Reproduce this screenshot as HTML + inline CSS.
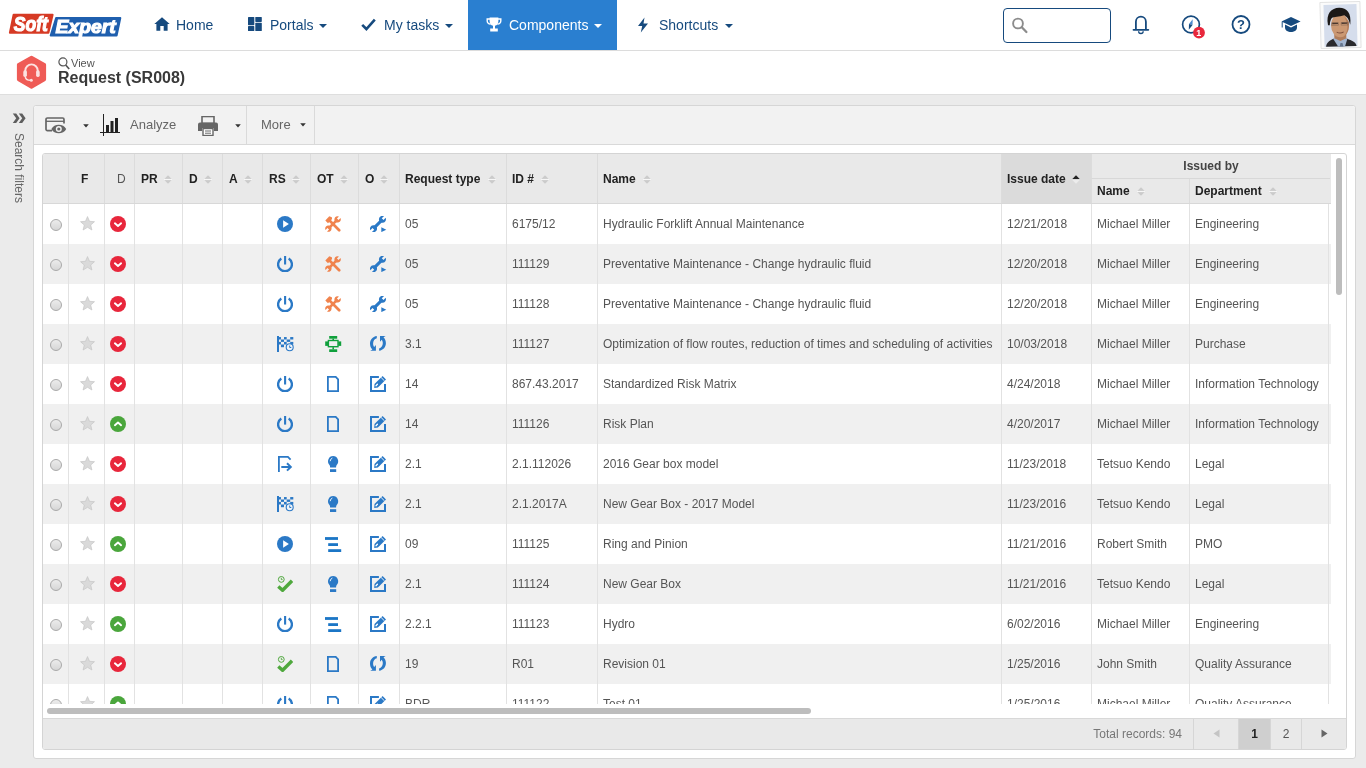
<!DOCTYPE html>
<html lang="en"><head><meta charset="utf-8"><title>Request (SR008)</title>
<style>
*{box-sizing:border-box;margin:0;padding:0}
html,body{width:1366px;height:768px;overflow:hidden;background:#ebebeb;font-family:"Liberation Sans",Arial,sans-serif;color:#555}
#nav{position:absolute;left:0;top:0;width:1366px;height:51px;background:#fff;border-bottom:1px solid #dcdcdc}
.ni{position:absolute;top:0;height:50px;line-height:50px;font-size:14px;color:#164a7e;white-space:nowrap}
.ni svg{position:absolute}
.caret{display:inline-block;width:0;height:0;border-left:4px solid transparent;border-right:4px solid transparent;border-top:4px solid currentColor;vertical-align:middle;margin-left:5px;position:relative;top:0px}
#comp{left:468px;width:149px;background:#2a7fd0;color:#fff}
#titlebar{position:absolute;left:0;top:51px;width:1366px;height:44px;background:#fff;border-bottom:1px solid #dedede}
#view{position:absolute;left:71px;top:6px;font-size:11px;color:#555;line-height:12px}
#title{position:absolute;left:58px;top:17px;font-size:16px;font-weight:bold;color:#3a3a3a;line-height:19px;letter-spacing:0}
#side{position:absolute;left:0;top:95px;width:34px;height:673px;background:#ebebeb}
#sidetxt{position:absolute;left:11px;top:133px;font-size:12px;color:#666;writing-mode:vertical-rl;line-height:16px;letter-spacing:0}
#panel{position:absolute;left:33px;top:105px;width:1323px;height:654px;background:#fff;border:1px solid #d6d6d6;border-radius:3px}
#tb{position:absolute;left:0;top:0;width:1321px;height:39px;background:#f2f2f2;border-bottom:1px solid #d9d9d9;border-radius:3px 3px 0 0}
.tbt{position:absolute;top:0;height:38px;line-height:38px;font-size:13px;color:#666}
.sep{position:absolute;top:0;width:1px;height:38px;background:#dadada}
#grid{position:absolute;left:8px;top:47px;width:1305px;height:597px;border:1px solid #d4d4d4;border-radius:3px;background:#fff;overflow:hidden}
#head{position:absolute;left:0;top:0;width:1288px;height:50px;background:#e9e9e9;border-bottom:1px solid #d8d8d8}
.h{position:absolute;font-size:12px;font-weight:bold;color:#222;padding-left:5px;padding-top:1px;border-left:1px solid #dcdcdc;white-space:nowrap;overflow:hidden}
.h:first-child{border-left:0}
.h.hf{padding-left:12px}
.h.hd{padding-left:12px}
.h.light{font-weight:normal;color:#555}
.h.sorted{background:#dbdbdb}
.h.sub{padding-top:0}
.h.grp{text-align:center;padding-left:0;padding-top:0;font-weight:bold;color:#444;border-bottom:1px solid #d8d8d8;height:25px !important}
.sort{margin-left:7px;vertical-align:middle;position:relative;top:0px}
.h.nar{padding-left:6px}
.h.nar .sort,.h.sorted .sort{margin-left:6px}
.h.rt .sort{margin-left:8px}
#body{position:absolute;left:0;top:50px;width:1288px;height:500px;overflow:hidden}
.row{position:absolute;left:0;width:1288px;height:40px;background:#fff}
.row.alt{background:#f0f0f0}
.c{position:absolute;top:0;height:40px;line-height:40px;font-size:12px;color:#555;border-left:1px solid #e2e2e2;white-space:nowrap;overflow:hidden}
.c:first-child{border-left:0}
.c.t{padding-left:5px}
.i{position:absolute;line-height:0;font-size:0}
.i svg{display:block}
.radio{display:block;width:12px;height:12px;border-radius:50%;border:1px solid #a9a9a9;background:linear-gradient(#ececec,#d6d6d6)}
#vsb{position:absolute;left:1293px;top:4px;width:6px;height:137px;border-radius:3px;background:#bdbdbd}
#hsb{position:absolute;left:4px;top:554px;width:764px;height:6px;border-radius:3px;background:#bdbdbd}
#foot{position:absolute;left:0;top:564px;width:1303px;height:31px;background:#e9e9e9;border-top:1px solid #d8d8d8}
.pg{position:absolute;top:0;height:30px;line-height:30px;text-align:center;font-size:12px;color:#555;border-left:1px solid #d6d6d6}
</style></head><body>
<div id="wrap" style="position:absolute;left:0;top:0;width:1366px;height:768px;will-change:transform">
<div id="nav">
  <svg id="logo" style="position:absolute;left:0;top:0" width="130" height="50" viewBox="0 0 130 50"><path d="M13.600 14.700 H52.600 L48.400 32.700 H9.900Z" fill="#d63a24" stroke="#d63a24" stroke-width="2" stroke-linejoin="round"/><path d="M56.100 18.100 H120.300 L116.600 35.600 H50.700Z" fill="#1f5fae" stroke="#1f5fae" stroke-width="2" stroke-linejoin="round"/>
    <text x="13.800" y="31.200" font-family="Liberation Sans,Arial,sans-serif" font-weight="bold" font-style="italic" font-size="20.800" fill="#fff" stroke="#fff" stroke-width="1.200" textLength="34" lengthAdjust="spacingAndGlyphs">Soft</text>
    <text x="55.600" y="32.800" font-family="Liberation Sans,Arial,sans-serif" font-weight="bold" font-style="italic" font-size="18.600" fill="#fff" stroke="#fff" stroke-width="1.100" textLength="60" lengthAdjust="spacingAndGlyphs">Expert</text></svg>
  <div class="ni" style="left:153px"><svg style="left:0.500px;top:16.500px" width="16" height="14" viewBox="0 0 16 14"><path d="M8 0.300 L0.300 7 H2.400 V13.700 H6.300 V9 H9.700 V13.700 H13.600 V7 H15.700Z" fill="#164a7e"/></svg><span style="margin-left:23px">Home</span></div>
  <div class="ni" style="left:248px"><svg style="left:0;top:17px" width="14" height="15" viewBox="0 0 14 15"><g fill="#164a7e"><rect x="0" y="0" width="6.300" height="8.200" rx="0.600"/><rect x="7.300" y="0" width="6.500" height="4.900" rx="0.600"/><rect x="0" y="9.100" width="6.300" height="5" rx="0.600"/><rect x="7.300" y="5.800" width="6.500" height="8.300" rx="0.600"/></g></svg><span style="margin-left:22px">Portals</span><span class="caret"></span></div>
  <div class="ni" style="left:361px"><svg style="left:0;top:18px" width="15" height="13" viewBox="0 0 15 13"><path d="M1.200 6.800 L5.400 11 L13.800 1.600" fill="none" stroke="#164a7e" stroke-width="2.600"/></svg><span style="margin-left:23px">My tasks</span><span class="caret" style="margin-left:6px"></span></div>
  <div class="ni" id="comp"><svg style="left:18px;top:17px" width="16" height="15" viewBox="0 0 16 15"><path d="M3.600 0.400 H12.400 V4 a4.400 5 0 0 1 -3.400 4.800 V11.600 H11.800 V14.600 H4.200 V11.600 H7 V8.800 A4.400 5 0 0 1 3.600 4Z" fill="#fff"/><path d="M4 2 H1.2 V4 a3 3 0 0 0 3.4 3 M12 2 H14.8 V4 a3 3 0 0 1 -3.4 3" fill="none" stroke="#fff" stroke-width="1.4"/></svg><span style="margin-left:41px">Components</span><span class="caret" style="margin-left:6px"></span></div>
  <div class="ni" style="left:637px"><svg style="left:0;top:17px" width="12" height="16" viewBox="0 0 12 16"><path d="M7.5 0.5 L1 9 H5.2 L3.8 15.5 L11 6.5 H6.5Z" fill="#164a7e"/></svg><span style="margin-left:22px">Shortcuts</span><span class="caret" style="margin-left:6.500px"></span></div>
  <div style="position:absolute;left:1003px;top:8px;width:108px;height:35px;border:1.5px solid #164a7e;border-radius:4px"><svg style="position:absolute;left:6px;top:6px" width="20" height="20" viewBox="0 0 20 20"><circle cx="8" cy="8.500" r="4.900" fill="none" stroke="#8c8c8c" stroke-width="1.900"/><path d="M11.800 12.300 L16.400 17" stroke="#8c8c8c" stroke-width="2.300" stroke-linecap="round"/></svg></div>
  <svg style="position:absolute;left:1130px;top:12px" width="22" height="24" viewBox="1130 12 22 24"><path d="M1135.900 29.800 V21.700 a5 5 0 0 1 10 0 V29.800" fill="none" stroke="#164a7e" stroke-width="1.800"/><path d="M1133.500 29.800 H1148.300" stroke="#164a7e" stroke-width="1.800" stroke-linecap="round"/><path d="M1138.600 31.200 a2.300 2.300 0 0 0 4.600 0" fill="none" stroke="#164a7e" stroke-width="1.300"/></svg>
  <svg style="position:absolute;left:1178px;top:12px" width="30" height="30" viewBox="1178 12 30 30"><circle cx="1191" cy="24.500" r="8.400" fill="none" stroke="#164a7e" stroke-width="1.700"/><path d="M1192.700 19.300 L1192.500 25.100 L1189 23.900Z" fill="#4a8bd0"/><path d="M1192.500 25.100 L1189 23.900 L1188.800 29.700Z" fill="#164a7e"/><circle cx="1199" cy="32.700" r="5.900" fill="#e8273c"/><text x="1198.800" y="35.900" text-anchor="middle" font-family="Liberation Sans,Arial,sans-serif" font-size="9" font-weight="bold" fill="#fff">1</text></svg>
  <svg style="position:absolute;left:1230px;top:13px" width="22" height="22" viewBox="0 0 22 22"><circle cx="11" cy="11.500" r="8.500" fill="none" stroke="#164a7e" stroke-width="1.800"/><text x="11" y="16" text-anchor="middle" font-family="Liberation Sans,Arial,sans-serif" font-size="13" font-weight="bold" fill="#164a7e">?</text></svg>
  <svg style="position:absolute;left:1280px;top:16px" width="22" height="18" viewBox="0 0 22 18"><path d="M11 1 L20.600 5.500 L11 10 L1.400 5.500Z" fill="#164a7e"/><path d="M5 8.600 V11.500 C5 17.500 17 17.500 17 11.500 V8.600 L11 11.400Z" fill="#164a7e"/><path d="M2.200 6 V11.500" stroke="#164a7e" stroke-width="1"/></svg>
  <svg id="avatar" style="position:absolute;left:1316px;top:0" width="50" height="50" viewBox="1316 0 50 50"><g transform="rotate(-1.500 1340 25)"><rect x="1320.500" y="2" width="40" height="46" fill="#fbfbfb" stroke="#dcdcdc" stroke-width="0.800"/><rect x="1324" y="4.500" width="33" height="42" fill="#d5ddec"/>
    <path d="M1325.500 46.500 C1326 42 1329 40.500 1333 38.500 L1347 39 C1351 41 1355.500 42 1356 46.500Z" fill="#2a2a2e"/>
    <path d="M1332.500 38 L1337.500 46.500 H1344.500 L1347 39Z" fill="#a3b5cf"/>
    <path d="M1340 43 L1339.200 46.500 H1342.800 L1342 43Z" fill="#66768e"/>
    <path d="M1334 30 H1346 V38.500 L1340 41 L1334 38Z" fill="#b07d5b"/>
    <ellipse cx="1340" cy="25.500" rx="9" ry="11.800" fill="#cb9872"/>
    <path d="M1344 16 C1348 22 1349 30 1344 36.500 C1348.500 33 1349.500 27 1349 22Z" fill="#a9724f" opacity="0.700"/>
    <path d="M1328 25 C1326 13 1332 7.800 1339.500 7.800 C1347 7.800 1352 13 1350.300 25 C1349 19.500 1347.500 17 1344.500 15.300 C1339 17 1334.500 16.300 1332 17.800 C1330.800 19.300 1330 21.500 1329.800 25Z" fill="#1b1817"/>
    <path d="M1332.300 23.300 H1338 M1341.600 23.300 H1347.300" stroke="#4a372d" stroke-width="1.300"/>
    <path d="M1331.600 22.600 h6.800 v2.600 h-6.800z M1341.200 22.600 h6.800 v2.600 h-6.800z" fill="none" stroke="#5c4a40" stroke-width="0.500" opacity="0.700"/>
    <path d="M1336.500 32 Q1340 34 1343.500 32" stroke="#7e4f3c" stroke-width="1" fill="none"/>
  </g></svg>
</div>
<div id="titlebar">
  <svg style="position:absolute;left:15px;top:3px" width="33" height="37" viewBox="0 0 33 37"><path d="M16.500 3.400 L29.400 10.800 V25.600 L16.500 33 L3.600 25.600 V10.800Z" fill="#ef5b56" stroke="#ef5b56" stroke-width="3.400" stroke-linejoin="round"/><g opacity="0.820"><path d="M10.300 19 V16.600 a6.200 6.200 0 0 1 12.400 0 V19" fill="none" stroke="#fff" stroke-width="1.900"/><rect x="8.300" y="16.300" width="3.600" height="6.600" rx="1.600" fill="#fff"/><rect x="21.100" y="16.300" width="3.600" height="6.600" rx="1.600" fill="#fff"/><path d="M10.300 22.400 c0 3 2.600 3.800 5.400 3.800" fill="none" stroke="#fff" stroke-width="1.400"/><circle cx="16.300" cy="26.200" r="1.500" fill="#fff"/></g></svg>
  <div id="view"><svg style="position:absolute;left:-13.500px;top:-0.500px" width="12" height="13" viewBox="0 0 12 13"><circle cx="4.900" cy="4.900" r="4" fill="none" stroke="#555" stroke-width="1.200"/><path d="M7.700 7.900 L11.200 12" stroke="#555" stroke-width="1.600"/></svg>View</div>
  <div id="title">Request (SR008)</div>
</div>
<div id="side">
  <svg style="position:absolute;left:12px;top:18px" width="15" height="11" viewBox="0 0 15 11"><path d="M0.800 0.600 H4.200 L7.600 5.300 L4.200 10 H0.800 L4.200 5.300Z M6.800 0.600 H10.200 L13.600 5.300 L10.200 10 H6.800 L10.200 5.300Z" fill="#5e5e5e"/></svg>
  <div id="sidetxt" style="top:38px">Search filters</div>
</div>
<div id="panel">
  <div id="tb">
    <svg style="position:absolute;left:11px;top:11px" width="22" height="18" viewBox="0 0 22 18"><path d="M7 13.600 H2.400 a1.400 1.400 0 0 1 -1.400 -1.400 V2.400 a1.400 1.400 0 0 1 1.400 -1.400 H17.600 a1.400 1.400 0 0 1 1.400 1.400 V6.500" fill="none" stroke="#666" stroke-width="1.700"/><path d="M1 4.300 H19" stroke="#666" stroke-width="1.300"/><path d="M6.400 12 C9 6.200 18.500 6.200 21.200 12 C18.500 17.800 9 17.800 6.400 12Z" fill="#666"/><circle cx="13.800" cy="12" r="3" fill="#f2f2f2"/><circle cx="13.800" cy="12" r="1.600" fill="#666"/></svg>
    <svg style="position:absolute;left:48.700px;top:17.500px" width="6" height="4" viewBox="0 0 6 4"><path d="M0.200 0.300 H5.800 L3 3.500Z" fill="#333"/></svg>
    <svg style="position:absolute;left:66px;top:8px" width="22" height="22" viewBox="0 0 22 22"><path d="M3.500 0 V22" stroke="#222" stroke-width="1"/><path d="M0 18.500 H20" stroke="#222" stroke-width="1"/><g fill="#222"><rect x="6" y="11" width="3" height="7"/><rect x="10.500" y="7" width="3" height="11"/><rect x="15" y="4" width="3" height="14"/></g></svg>
    <div class="tbt" style="left:96px">Analyze</div>
    <svg style="position:absolute;left:163px;top:10px" width="22" height="20" viewBox="0 0 22 20"><rect x="5" y="0.500" width="12" height="7" fill="none" stroke="#666" stroke-width="1.600"/><path d="M1 8.500 a2 2 0 0 1 2 -2 H19 a2 2 0 0 1 2 2 V15 H17 V12 H5 V15 H1Z" fill="#666"/><rect x="6" y="12.500" width="10" height="7" fill="#fff" stroke="#666" stroke-width="1.400"/><path d="M8 15 H14 M8 17.200 H14" stroke="#666" stroke-width="1"/></svg>
    <svg style="position:absolute;left:201.300px;top:17.500px" width="6" height="4" viewBox="0 0 6 4"><path d="M0.200 0.300 H5.800 L3 3.500Z" fill="#333"/></svg>
    <div class="sep" style="left:212px"></div>
    <div class="tbt" style="left:227px">More<svg style="margin-left:9px;vertical-align:middle;position:relative;top:-0.500px" width="6" height="4" viewBox="0 0 6 4"><path d="M0.200 0.300 H5.800 L3 3.500Z" fill="#333"/></svg></div>
    <div class="sep" style="left:280px"></div>
  </div>
  <div id="grid">
    <div id="head">
<div class="h " style="left:0px;width:25px;top:0px;height:49px;line-height:49px"><span></span></div>
<div class="h hf" style="left:25px;width:36px;top:0px;height:49px;line-height:49px"><span>F</span></div>
<div class="h hd light" style="left:61px;width:30px;top:0px;height:49px;line-height:49px"><span>D</span></div>
<div class="h nar" style="left:91px;width:48px;top:0px;height:49px;line-height:49px"><span>PR</span><svg class="sort" width="8" height="9" viewBox="0 0 8 9"><path d="M0.300 3.900 L4 0.300 L7.700 3.900Z" fill="#cbcbcb"/><path d="M0.300 5.100 L4 8.700 L7.700 5.100Z" fill="#cbcbcb"/><rect x="0" y="3.900" width="8" height="1.200" fill="#f6f6f6"/></svg></div>
<div class="h nar" style="left:139px;width:40px;top:0px;height:49px;line-height:49px"><span>D</span><svg class="sort" width="8" height="9" viewBox="0 0 8 9"><path d="M0.300 3.900 L4 0.300 L7.700 3.900Z" fill="#cbcbcb"/><path d="M0.300 5.100 L4 8.700 L7.700 5.100Z" fill="#cbcbcb"/><rect x="0" y="3.900" width="8" height="1.200" fill="#f6f6f6"/></svg></div>
<div class="h nar" style="left:179px;width:40px;top:0px;height:49px;line-height:49px"><span>A</span><svg class="sort" width="8" height="9" viewBox="0 0 8 9"><path d="M0.300 3.900 L4 0.300 L7.700 3.900Z" fill="#cbcbcb"/><path d="M0.300 5.100 L4 8.700 L7.700 5.100Z" fill="#cbcbcb"/><rect x="0" y="3.900" width="8" height="1.200" fill="#f6f6f6"/></svg></div>
<div class="h nar" style="left:219px;width:48px;top:0px;height:49px;line-height:49px"><span>RS</span><svg class="sort" width="8" height="9" viewBox="0 0 8 9"><path d="M0.300 3.900 L4 0.300 L7.700 3.900Z" fill="#cbcbcb"/><path d="M0.300 5.100 L4 8.700 L7.700 5.100Z" fill="#cbcbcb"/><rect x="0" y="3.900" width="8" height="1.200" fill="#f6f6f6"/></svg></div>
<div class="h nar" style="left:267px;width:48px;top:0px;height:49px;line-height:49px"><span>OT</span><svg class="sort" width="8" height="9" viewBox="0 0 8 9"><path d="M0.300 3.900 L4 0.300 L7.700 3.900Z" fill="#cbcbcb"/><path d="M0.300 5.100 L4 8.700 L7.700 5.100Z" fill="#cbcbcb"/><rect x="0" y="3.900" width="8" height="1.200" fill="#f6f6f6"/></svg></div>
<div class="h nar" style="left:315px;width:41px;top:0px;height:49px;line-height:49px"><span>O</span><svg class="sort" width="8" height="9" viewBox="0 0 8 9"><path d="M0.300 3.900 L4 0.300 L7.700 3.900Z" fill="#cbcbcb"/><path d="M0.300 5.100 L4 8.700 L7.700 5.100Z" fill="#cbcbcb"/><rect x="0" y="3.900" width="8" height="1.200" fill="#f6f6f6"/></svg></div>
<div class="h rt" style="left:356px;width:107px;top:0px;height:49px;line-height:49px"><span>Request type</span><svg class="sort" width="8" height="9" viewBox="0 0 8 9"><path d="M0.300 3.900 L4 0.300 L7.700 3.900Z" fill="#cbcbcb"/><path d="M0.300 5.100 L4 8.700 L7.700 5.100Z" fill="#cbcbcb"/><rect x="0" y="3.900" width="8" height="1.200" fill="#f6f6f6"/></svg></div>
<div class="h " style="left:463px;width:91px;top:0px;height:49px;line-height:49px"><span>ID #</span><svg class="sort" width="8" height="9" viewBox="0 0 8 9"><path d="M0.300 3.900 L4 0.300 L7.700 3.900Z" fill="#cbcbcb"/><path d="M0.300 5.100 L4 8.700 L7.700 5.100Z" fill="#cbcbcb"/><rect x="0" y="3.900" width="8" height="1.200" fill="#f6f6f6"/></svg></div>
<div class="h " style="left:554px;width:404px;top:0px;height:49px;line-height:49px"><span>Name</span><svg class="sort" width="8" height="9" viewBox="0 0 8 9"><path d="M0.300 3.900 L4 0.300 L7.700 3.900Z" fill="#cbcbcb"/><path d="M0.300 5.100 L4 8.700 L7.700 5.100Z" fill="#cbcbcb"/><rect x="0" y="3.900" width="8" height="1.200" fill="#f6f6f6"/></svg></div>
<div class="h sorted" style="left:958px;width:90px;top:0;height:49px;line-height:49px"><span>Issue date</span><svg class="sort" width="8" height="9" viewBox="0 0 8 9"><path d="M0.300 3.900 L4 0.300 L7.700 3.900Z" fill="#222"/><path d="M0.300 5.100 L4 8.700 L7.700 5.100Z" fill="#ececec"/></svg></div>
<div class="h grp" style="left:1048px;width:239px;top:0;height:24px;line-height:24px"><span>Issued by</span></div>
<div class="h sub" style="left:1048px;width:98px;top:25px;height:24px;line-height:24px"><span>Name</span><svg class="sort" width="8" height="9" viewBox="0 0 8 9"><path d="M0.300 3.900 L4 0.300 L7.700 3.900Z" fill="#cbcbcb"/><path d="M0.300 5.100 L4 8.700 L7.700 5.100Z" fill="#cbcbcb"/><rect x="0" y="3.900" width="8" height="1.200" fill="#f6f6f6"/></svg></div>
<div class="h sub" style="left:1146px;width:141px;top:25px;height:24px;line-height:24px"><span>Department</span><svg class="sort" width="8" height="9" viewBox="0 0 8 9"><path d="M0.300 3.900 L4 0.300 L7.700 3.900Z" fill="#cbcbcb"/><path d="M0.300 5.100 L4 8.700 L7.700 5.100Z" fill="#cbcbcb"/><rect x="0" y="3.900" width="8" height="1.200" fill="#f6f6f6"/></svg></div>
    </div>
    <div id="body">
<div class="row" style="top:0px"><div class="c " style="left:0px;width:25px"></div><div class="c " style="left:25px;width:36px"></div><div class="c " style="left:61px;width:30px"></div><div class="c " style="left:91px;width:48px"></div><div class="c " style="left:139px;width:40px"></div><div class="c " style="left:179px;width:40px"></div><div class="c " style="left:219px;width:48px"></div><div class="c " style="left:267px;width:48px"></div><div class="c " style="left:315px;width:41px"></div><div class="c t" style="left:356px;width:107px">05</div><div class="c t" style="left:463px;width:91px">6175/12</div><div class="c t" style="left:554px;width:404px">Hydraulic Forklift Annual Maintenance</div><div class="c t" style="left:958px;width:90px">12/21/2018</div><div class="c t" style="left:1048px;width:98px">Michael Miller</div><div class="c t" style="left:1146px;width:141px">Engineering</div><div class="i" style="left:7px;top:15px"><span class="radio"></span></div><div class="i" style="left:36.5px;top:12px"><svg width="15" height="15" viewBox="0 0 15 15"><path d="M7.500 0.600 L9.500 5.300 L14.500 5.700 L10.700 9 L11.900 14 L7.500 11.300 L3.100 14 L4.300 9 L0.500 5.700 L5.500 5.300Z" fill="#dadada" stroke="#c6c6c6" stroke-width="0.700"/></svg></div><div class="i" style="left:67px;top:12px"><svg width="16" height="16" viewBox="0 0 16 16"><circle cx="8" cy="8" r="8" fill="#e8273c"/><path d="M4.900 7.300 L8 10 L11.100 7.300" fill="none" stroke="#fff" stroke-width="1.900" stroke-linecap="round" stroke-linejoin="round"/></svg></div><div class="i" style="left:234px;top:12px"><svg width="16" height="16" viewBox="0 0 16 16"><circle cx="8" cy="8" r="8" fill="#2b79c6"/><path d="M6.100 4.300 L11.900 8 L6.100 11.700Z" fill="#fff"/></svg></div><div class="i" style="left:282px;top:12px"><svg width="16" height="16" viewBox="0 0 16 16"><g fill="#f0834d" stroke="none"><path d="M12.400 3.600 L3.600 12.400" stroke="#f0834d" stroke-width="2.700"/><path d="M15.500 2.050 A3.200 3.200 0 1 1 13.950 0.500 L11.960 2.480 L13.520 4.040Z"/><path d="M0.500 13.950 A3.200 3.200 0 1 1 2.050 15.500 L4.040 13.520 L2.480 11.960Z"/><path d="M5 5 L14.200 14.200" stroke="#f0834d" stroke-width="2.700" stroke-linecap="round"/><path d="M0.300 4.600 L4.300 0.300 L6.800 1.300 L7.100 3 L3 7.200Z"/></g></svg></div><div class="i" style="left:327px;top:12px"><svg width="17" height="16" viewBox="0 0 17 16"><g fill="#2b79c6"><path d="M12.400 3.600 L3.600 12.400" stroke="#2b79c6" stroke-width="3"/><path d="M15.500 2.050 A3.200 3.200 0 1 1 13.950 0.500 L11.960 2.480 L13.520 4.040Z" transform="translate(-1.400 -0.400) scale(1.1)"/><path d="M0.500 13.950 A3.200 3.200 0 1 1 2.050 15.500 L4.040 13.520 L2.480 11.960Z" transform="translate(-0.200 -1.200) scale(1.1)"/><path d="M11.300 11.300 L16.300 13.700 L11.300 16.100Z"/></g></svg></div></div>
<div class="row alt" style="top:40px"><div class="c " style="left:0px;width:25px"></div><div class="c " style="left:25px;width:36px"></div><div class="c " style="left:61px;width:30px"></div><div class="c " style="left:91px;width:48px"></div><div class="c " style="left:139px;width:40px"></div><div class="c " style="left:179px;width:40px"></div><div class="c " style="left:219px;width:48px"></div><div class="c " style="left:267px;width:48px"></div><div class="c " style="left:315px;width:41px"></div><div class="c t" style="left:356px;width:107px">05</div><div class="c t" style="left:463px;width:91px">111129</div><div class="c t" style="left:554px;width:404px">Preventative Maintenance - Change hydraulic fluid</div><div class="c t" style="left:958px;width:90px">12/20/2018</div><div class="c t" style="left:1048px;width:98px">Michael Miller</div><div class="c t" style="left:1146px;width:141px">Engineering</div><div class="i" style="left:7px;top:15px"><span class="radio"></span></div><div class="i" style="left:36.5px;top:12px"><svg width="15" height="15" viewBox="0 0 15 15"><path d="M7.500 0.600 L9.500 5.300 L14.500 5.700 L10.700 9 L11.900 14 L7.500 11.300 L3.100 14 L4.300 9 L0.500 5.700 L5.500 5.300Z" fill="#dadada" stroke="#c6c6c6" stroke-width="0.700"/></svg></div><div class="i" style="left:67px;top:12px"><svg width="16" height="16" viewBox="0 0 16 16"><circle cx="8" cy="8" r="8" fill="#e8273c"/><path d="M4.900 7.300 L8 10 L11.100 7.300" fill="none" stroke="#fff" stroke-width="1.900" stroke-linecap="round" stroke-linejoin="round"/></svg></div><div class="i" style="left:234px;top:12px"><svg width="16" height="16" viewBox="0 0 16 16"><path d="M4.300 2.500 A6.900 6.900 0 1 0 11.700 2.500" fill="none" stroke="#2b79c6" stroke-width="2.400"/><path d="M8.100 0 V8.600" stroke="#2b79c6" stroke-width="2.100"/></svg></div><div class="i" style="left:282px;top:12px"><svg width="16" height="16" viewBox="0 0 16 16"><g fill="#f0834d" stroke="none"><path d="M12.400 3.600 L3.600 12.400" stroke="#f0834d" stroke-width="2.700"/><path d="M15.500 2.050 A3.200 3.200 0 1 1 13.950 0.500 L11.960 2.480 L13.520 4.040Z"/><path d="M0.500 13.950 A3.200 3.200 0 1 1 2.050 15.500 L4.040 13.520 L2.480 11.960Z"/><path d="M5 5 L14.200 14.200" stroke="#f0834d" stroke-width="2.700" stroke-linecap="round"/><path d="M0.300 4.600 L4.300 0.300 L6.800 1.300 L7.100 3 L3 7.200Z"/></g></svg></div><div class="i" style="left:327px;top:12px"><svg width="17" height="16" viewBox="0 0 17 16"><g fill="#2b79c6"><path d="M12.400 3.600 L3.600 12.400" stroke="#2b79c6" stroke-width="3"/><path d="M15.500 2.050 A3.200 3.200 0 1 1 13.950 0.500 L11.960 2.480 L13.520 4.040Z" transform="translate(-1.400 -0.400) scale(1.1)"/><path d="M0.500 13.950 A3.200 3.200 0 1 1 2.050 15.500 L4.040 13.520 L2.480 11.960Z" transform="translate(-0.200 -1.200) scale(1.1)"/><path d="M11.300 11.300 L16.300 13.700 L11.300 16.100Z"/></g></svg></div></div>
<div class="row" style="top:80px"><div class="c " style="left:0px;width:25px"></div><div class="c " style="left:25px;width:36px"></div><div class="c " style="left:61px;width:30px"></div><div class="c " style="left:91px;width:48px"></div><div class="c " style="left:139px;width:40px"></div><div class="c " style="left:179px;width:40px"></div><div class="c " style="left:219px;width:48px"></div><div class="c " style="left:267px;width:48px"></div><div class="c " style="left:315px;width:41px"></div><div class="c t" style="left:356px;width:107px">05</div><div class="c t" style="left:463px;width:91px">111128</div><div class="c t" style="left:554px;width:404px">Preventative Maintenance - Change hydraulic fluid</div><div class="c t" style="left:958px;width:90px">12/20/2018</div><div class="c t" style="left:1048px;width:98px">Michael Miller</div><div class="c t" style="left:1146px;width:141px">Engineering</div><div class="i" style="left:7px;top:15px"><span class="radio"></span></div><div class="i" style="left:36.5px;top:12px"><svg width="15" height="15" viewBox="0 0 15 15"><path d="M7.500 0.600 L9.500 5.300 L14.500 5.700 L10.700 9 L11.900 14 L7.500 11.300 L3.100 14 L4.300 9 L0.500 5.700 L5.500 5.300Z" fill="#dadada" stroke="#c6c6c6" stroke-width="0.700"/></svg></div><div class="i" style="left:67px;top:12px"><svg width="16" height="16" viewBox="0 0 16 16"><circle cx="8" cy="8" r="8" fill="#e8273c"/><path d="M4.900 7.300 L8 10 L11.100 7.300" fill="none" stroke="#fff" stroke-width="1.900" stroke-linecap="round" stroke-linejoin="round"/></svg></div><div class="i" style="left:234px;top:12px"><svg width="16" height="16" viewBox="0 0 16 16"><path d="M4.300 2.500 A6.900 6.900 0 1 0 11.700 2.500" fill="none" stroke="#2b79c6" stroke-width="2.400"/><path d="M8.100 0 V8.600" stroke="#2b79c6" stroke-width="2.100"/></svg></div><div class="i" style="left:282px;top:12px"><svg width="16" height="16" viewBox="0 0 16 16"><g fill="#f0834d" stroke="none"><path d="M12.400 3.600 L3.600 12.400" stroke="#f0834d" stroke-width="2.700"/><path d="M15.500 2.050 A3.200 3.200 0 1 1 13.950 0.500 L11.960 2.480 L13.520 4.040Z"/><path d="M0.500 13.950 A3.200 3.200 0 1 1 2.050 15.500 L4.040 13.520 L2.480 11.960Z"/><path d="M5 5 L14.200 14.200" stroke="#f0834d" stroke-width="2.700" stroke-linecap="round"/><path d="M0.300 4.600 L4.300 0.300 L6.800 1.300 L7.100 3 L3 7.200Z"/></g></svg></div><div class="i" style="left:327px;top:12px"><svg width="17" height="16" viewBox="0 0 17 16"><g fill="#2b79c6"><path d="M12.400 3.600 L3.600 12.400" stroke="#2b79c6" stroke-width="3"/><path d="M15.500 2.050 A3.200 3.200 0 1 1 13.950 0.500 L11.960 2.480 L13.520 4.040Z" transform="translate(-1.400 -0.400) scale(1.1)"/><path d="M0.500 13.950 A3.200 3.200 0 1 1 2.050 15.500 L4.040 13.520 L2.480 11.960Z" transform="translate(-0.200 -1.200) scale(1.1)"/><path d="M11.300 11.300 L16.300 13.700 L11.300 16.100Z"/></g></svg></div></div>
<div class="row alt" style="top:120px"><div class="c " style="left:0px;width:25px"></div><div class="c " style="left:25px;width:36px"></div><div class="c " style="left:61px;width:30px"></div><div class="c " style="left:91px;width:48px"></div><div class="c " style="left:139px;width:40px"></div><div class="c " style="left:179px;width:40px"></div><div class="c " style="left:219px;width:48px"></div><div class="c " style="left:267px;width:48px"></div><div class="c " style="left:315px;width:41px"></div><div class="c t" style="left:356px;width:107px">3.1</div><div class="c t" style="left:463px;width:91px">111127</div><div class="c t" style="left:554px;width:404px">Optimization of flow routes, reduction of times and scheduling of activities</div><div class="c t" style="left:958px;width:90px">10/03/2018</div><div class="c t" style="left:1048px;width:98px">Michael Miller</div><div class="c t" style="left:1146px;width:141px">Purchase</div><div class="i" style="left:7px;top:15px"><span class="radio"></span></div><div class="i" style="left:36.5px;top:12px"><svg width="15" height="15" viewBox="0 0 15 15"><path d="M7.500 0.600 L9.500 5.300 L14.500 5.700 L10.700 9 L11.900 14 L7.500 11.300 L3.100 14 L4.300 9 L0.500 5.700 L5.500 5.300Z" fill="#dadada" stroke="#c6c6c6" stroke-width="0.700"/></svg></div><div class="i" style="left:67px;top:12px"><svg width="16" height="16" viewBox="0 0 16 16"><circle cx="8" cy="8" r="8" fill="#e8273c"/><path d="M4.900 7.300 L8 10 L11.100 7.300" fill="none" stroke="#fff" stroke-width="1.900" stroke-linecap="round" stroke-linejoin="round"/></svg></div><div class="i" style="left:234px;top:12px"><svg width="17" height="16" viewBox="0 0 17 16"><g fill="#2b79c6"><rect x="0" y="0" width="2" height="16"/><rect x="2.000" y="1.050" width="1.950" height="2.450"/><rect x="7.000" y="1.050" width="2.700" height="2.450"/><rect x="13.200" y="1.050" width="3.100" height="2.450"/><rect x="3.950" y="3.500" width="3.050" height="2.400"/><rect x="9.700" y="3.500" width="3.500" height="2.400"/><rect x="2.000" y="5.900" width="1.950" height="2.600"/><rect x="7.000" y="5.900" width="2.700" height="2.600"/><rect x="13.200" y="5.900" width="3.100" height="2.600"/><rect x="3.950" y="8.500" width="3.050" height="2.700"/><rect x="9.700" y="8.500" width="3.500" height="2.700"/></g><circle cx="12.700" cy="11.300" r="3.500" fill="#eef3f9" stroke="#2b79c6" stroke-width="1.100"/><path d="M12.700 9.500 V11.500 H14.300" stroke="#2b79c6" stroke-width="1" fill="none"/></svg></div><div class="i" style="left:282px;top:12px"><svg width="17" height="16" viewBox="0 0 17 16"><g fill="#10a03c"><rect x="4.200" y="0" width="8" height="2.700"/><rect x="4.200" y="13.300" width="8" height="2.700"/><rect x="0.200" y="5.400" width="3" height="4.500"/><rect x="13.200" y="5.400" width="3" height="4.500"/><rect x="7.400" y="2.600" width="1.600" height="1.400"/><rect x="7.400" y="11.200" width="1.600" height="2.200"/></g><rect x="3.400" y="4.500" width="9.600" height="6.200" fill="none" stroke="#10a03c" stroke-width="1.400"/></svg></div><div class="i" style="left:327px;top:12px"><svg width="17" height="16" viewBox="0 0 17 16"><g fill="#2b79c6"><path d="M6.800 0 C2.500 0.500 0 4 0 7.500 C0 10 0.800 12 2.400 13.600 L0.250 14.800 H5.900 V9.100 L4.200 11 C3.400 10 3.100 8.800 3.100 7.500 C3.100 5 4.600 2.800 6.800 2.300Z"/><path d="M6.800 0 C2.500 0.500 0 4 0 7.500 C0 10 0.800 12 2.400 13.600 L0.250 14.800 H5.900 V9.100 L4.200 11 C3.400 10 3.100 8.800 3.100 7.500 C3.100 5 4.600 2.800 6.800 2.300Z" transform="rotate(180 7.950 7.400)"/></g></svg></div></div>
<div class="row" style="top:160px"><div class="c " style="left:0px;width:25px"></div><div class="c " style="left:25px;width:36px"></div><div class="c " style="left:61px;width:30px"></div><div class="c " style="left:91px;width:48px"></div><div class="c " style="left:139px;width:40px"></div><div class="c " style="left:179px;width:40px"></div><div class="c " style="left:219px;width:48px"></div><div class="c " style="left:267px;width:48px"></div><div class="c " style="left:315px;width:41px"></div><div class="c t" style="left:356px;width:107px">14</div><div class="c t" style="left:463px;width:91px">867.43.2017</div><div class="c t" style="left:554px;width:404px">Standardized Risk Matrix</div><div class="c t" style="left:958px;width:90px">4/24/2018</div><div class="c t" style="left:1048px;width:98px">Michael Miller</div><div class="c t" style="left:1146px;width:141px">Information Technology</div><div class="i" style="left:7px;top:15px"><span class="radio"></span></div><div class="i" style="left:36.5px;top:12px"><svg width="15" height="15" viewBox="0 0 15 15"><path d="M7.500 0.600 L9.500 5.300 L14.500 5.700 L10.700 9 L11.900 14 L7.500 11.300 L3.100 14 L4.300 9 L0.500 5.700 L5.500 5.300Z" fill="#dadada" stroke="#c6c6c6" stroke-width="0.700"/></svg></div><div class="i" style="left:67px;top:12px"><svg width="16" height="16" viewBox="0 0 16 16"><circle cx="8" cy="8" r="8" fill="#e8273c"/><path d="M4.900 7.300 L8 10 L11.100 7.300" fill="none" stroke="#fff" stroke-width="1.900" stroke-linecap="round" stroke-linejoin="round"/></svg></div><div class="i" style="left:234px;top:12px"><svg width="16" height="16" viewBox="0 0 16 16"><path d="M4.300 2.500 A6.900 6.900 0 1 0 11.700 2.500" fill="none" stroke="#2b79c6" stroke-width="2.400"/><path d="M8.100 0 V8.600" stroke="#2b79c6" stroke-width="2.100"/></svg></div><div class="i" style="left:282px;top:12px"><svg width="16" height="16" viewBox="0 0 16 16"><path d="M2.900 0.900 H10.700 L13.100 3.300 V15.100 H2.900Z" fill="none" stroke="#2b79c6" stroke-width="1.800"/></svg></div><div class="i" style="left:327px;top:12px"><svg width="16" height="16" viewBox="0 0 16 16"><path d="M8.900 1 H1 V15 H15 V8.100" fill="none" stroke="#2b79c6" stroke-width="2"/><path d="M4.200 11.900 L4.500 8.100 L12.600 0 L16 3.400 L7.900 11.500Z" fill="#2b79c6"/><path d="M11.100 1.500 L14.500 4.900" stroke="#fff" stroke-width="0.900"/><path d="M6 9.700 L7.400 8.300" stroke="#fff" stroke-width="1.300" stroke-linecap="round"/></svg></div></div>
<div class="row alt" style="top:200px"><div class="c " style="left:0px;width:25px"></div><div class="c " style="left:25px;width:36px"></div><div class="c " style="left:61px;width:30px"></div><div class="c " style="left:91px;width:48px"></div><div class="c " style="left:139px;width:40px"></div><div class="c " style="left:179px;width:40px"></div><div class="c " style="left:219px;width:48px"></div><div class="c " style="left:267px;width:48px"></div><div class="c " style="left:315px;width:41px"></div><div class="c t" style="left:356px;width:107px">14</div><div class="c t" style="left:463px;width:91px">111126</div><div class="c t" style="left:554px;width:404px">Risk Plan</div><div class="c t" style="left:958px;width:90px">4/20/2017</div><div class="c t" style="left:1048px;width:98px">Michael Miller</div><div class="c t" style="left:1146px;width:141px">Information Technology</div><div class="i" style="left:7px;top:15px"><span class="radio"></span></div><div class="i" style="left:36.5px;top:12px"><svg width="15" height="15" viewBox="0 0 15 15"><path d="M7.500 0.600 L9.500 5.300 L14.500 5.700 L10.700 9 L11.900 14 L7.500 11.300 L3.100 14 L4.300 9 L0.500 5.700 L5.500 5.300Z" fill="#dadada" stroke="#c6c6c6" stroke-width="0.700"/></svg></div><div class="i" style="left:67px;top:12px"><svg width="16" height="16" viewBox="0 0 16 16"><circle cx="8" cy="8" r="8" fill="#4aa63c"/><path d="M4.900 9.200 L8 6.500 L11.100 9.200" fill="none" stroke="#fff" stroke-width="1.900" stroke-linecap="round" stroke-linejoin="round"/></svg></div><div class="i" style="left:234px;top:12px"><svg width="16" height="16" viewBox="0 0 16 16"><path d="M4.300 2.500 A6.900 6.900 0 1 0 11.700 2.500" fill="none" stroke="#2b79c6" stroke-width="2.400"/><path d="M8.100 0 V8.600" stroke="#2b79c6" stroke-width="2.100"/></svg></div><div class="i" style="left:282px;top:12px"><svg width="16" height="16" viewBox="0 0 16 16"><path d="M2.900 0.900 H10.700 L13.100 3.300 V15.100 H2.900Z" fill="none" stroke="#2b79c6" stroke-width="1.800"/></svg></div><div class="i" style="left:327px;top:12px"><svg width="16" height="16" viewBox="0 0 16 16"><path d="M8.900 1 H1 V15 H15 V8.100" fill="none" stroke="#2b79c6" stroke-width="2"/><path d="M4.200 11.900 L4.500 8.100 L12.600 0 L16 3.400 L7.900 11.500Z" fill="#2b79c6"/><path d="M11.100 1.500 L14.500 4.900" stroke="#fff" stroke-width="0.900"/><path d="M6 9.700 L7.400 8.300" stroke="#fff" stroke-width="1.300" stroke-linecap="round"/></svg></div></div>
<div class="row" style="top:240px"><div class="c " style="left:0px;width:25px"></div><div class="c " style="left:25px;width:36px"></div><div class="c " style="left:61px;width:30px"></div><div class="c " style="left:91px;width:48px"></div><div class="c " style="left:139px;width:40px"></div><div class="c " style="left:179px;width:40px"></div><div class="c " style="left:219px;width:48px"></div><div class="c " style="left:267px;width:48px"></div><div class="c " style="left:315px;width:41px"></div><div class="c t" style="left:356px;width:107px">2.1</div><div class="c t" style="left:463px;width:91px">2.1.112026</div><div class="c t" style="left:554px;width:404px">2016 Gear box model</div><div class="c t" style="left:958px;width:90px">11/23/2018</div><div class="c t" style="left:1048px;width:98px">Tetsuo Kendo</div><div class="c t" style="left:1146px;width:141px">Legal</div><div class="i" style="left:7px;top:15px"><span class="radio"></span></div><div class="i" style="left:36.5px;top:12px"><svg width="15" height="15" viewBox="0 0 15 15"><path d="M7.500 0.600 L9.500 5.300 L14.500 5.700 L10.700 9 L11.900 14 L7.500 11.300 L3.100 14 L4.300 9 L0.500 5.700 L5.500 5.300Z" fill="#dadada" stroke="#c6c6c6" stroke-width="0.700"/></svg></div><div class="i" style="left:67px;top:12px"><svg width="16" height="16" viewBox="0 0 16 16"><circle cx="8" cy="8" r="8" fill="#e8273c"/><path d="M4.900 7.300 L8 10 L11.100 7.300" fill="none" stroke="#fff" stroke-width="1.900" stroke-linecap="round" stroke-linejoin="round"/></svg></div><div class="i" style="left:234px;top:12px"><svg width="16" height="16" viewBox="0 0 16 16"><path d="M1.900 16 V0.900 H10.900 L13.600 3.600" fill="none" stroke="#2b79c6" stroke-width="1.800"/><path d="M4.300 10.900 H13.400 M10 7.200 L13.800 10.900 L10 14.600" fill="none" stroke="#2b79c6" stroke-width="2"/></svg></div><div class="i" style="left:282px;top:12px"><svg width="16" height="16" viewBox="0 0 16 16"><path d="M8.100 0 a5.100 5.300 0 0 1 3.600 9 c-0.500 0.700 -0.600 1.400 -0.600 2.500 h-6 c0 -1.100 -0.100 -1.800 -0.600 -2.500 A5.100 5.300 0 0 1 8.100 0z" fill="#2b79c6"/><rect x="5" y="13.200" width="6.200" height="2.800" fill="#2b79c6"/><path d="M5.200 4.800 a3 3 0 0 1 1.800 -2.600" stroke="#fff" stroke-width="0.900" fill="none" stroke-linecap="round"/></svg></div><div class="i" style="left:327px;top:12px"><svg width="16" height="16" viewBox="0 0 16 16"><path d="M8.900 1 H1 V15 H15 V8.100" fill="none" stroke="#2b79c6" stroke-width="2"/><path d="M4.200 11.900 L4.500 8.100 L12.600 0 L16 3.400 L7.900 11.500Z" fill="#2b79c6"/><path d="M11.100 1.500 L14.500 4.900" stroke="#fff" stroke-width="0.900"/><path d="M6 9.700 L7.400 8.300" stroke="#fff" stroke-width="1.300" stroke-linecap="round"/></svg></div></div>
<div class="row alt" style="top:280px"><div class="c " style="left:0px;width:25px"></div><div class="c " style="left:25px;width:36px"></div><div class="c " style="left:61px;width:30px"></div><div class="c " style="left:91px;width:48px"></div><div class="c " style="left:139px;width:40px"></div><div class="c " style="left:179px;width:40px"></div><div class="c " style="left:219px;width:48px"></div><div class="c " style="left:267px;width:48px"></div><div class="c " style="left:315px;width:41px"></div><div class="c t" style="left:356px;width:107px">2.1</div><div class="c t" style="left:463px;width:91px">2.1.2017A</div><div class="c t" style="left:554px;width:404px">New Gear Box - 2017 Model</div><div class="c t" style="left:958px;width:90px">11/23/2016</div><div class="c t" style="left:1048px;width:98px">Tetsuo Kendo</div><div class="c t" style="left:1146px;width:141px">Legal</div><div class="i" style="left:7px;top:15px"><span class="radio"></span></div><div class="i" style="left:36.5px;top:12px"><svg width="15" height="15" viewBox="0 0 15 15"><path d="M7.500 0.600 L9.500 5.300 L14.500 5.700 L10.700 9 L11.900 14 L7.500 11.300 L3.100 14 L4.300 9 L0.500 5.700 L5.500 5.300Z" fill="#dadada" stroke="#c6c6c6" stroke-width="0.700"/></svg></div><div class="i" style="left:67px;top:12px"><svg width="16" height="16" viewBox="0 0 16 16"><circle cx="8" cy="8" r="8" fill="#e8273c"/><path d="M4.900 7.300 L8 10 L11.100 7.300" fill="none" stroke="#fff" stroke-width="1.900" stroke-linecap="round" stroke-linejoin="round"/></svg></div><div class="i" style="left:234px;top:12px"><svg width="17" height="16" viewBox="0 0 17 16"><g fill="#2b79c6"><rect x="0" y="0" width="2" height="16"/><rect x="2.000" y="1.050" width="1.950" height="2.450"/><rect x="7.000" y="1.050" width="2.700" height="2.450"/><rect x="13.200" y="1.050" width="3.100" height="2.450"/><rect x="3.950" y="3.500" width="3.050" height="2.400"/><rect x="9.700" y="3.500" width="3.500" height="2.400"/><rect x="2.000" y="5.900" width="1.950" height="2.600"/><rect x="7.000" y="5.900" width="2.700" height="2.600"/><rect x="13.200" y="5.900" width="3.100" height="2.600"/><rect x="3.950" y="8.500" width="3.050" height="2.700"/><rect x="9.700" y="8.500" width="3.500" height="2.700"/></g><circle cx="12.700" cy="11.300" r="3.500" fill="#eef3f9" stroke="#2b79c6" stroke-width="1.100"/><path d="M12.700 9.500 V11.500 H14.300" stroke="#2b79c6" stroke-width="1" fill="none"/></svg></div><div class="i" style="left:282px;top:12px"><svg width="16" height="16" viewBox="0 0 16 16"><path d="M8.100 0 a5.100 5.300 0 0 1 3.600 9 c-0.500 0.700 -0.600 1.400 -0.600 2.500 h-6 c0 -1.100 -0.100 -1.800 -0.600 -2.500 A5.100 5.300 0 0 1 8.100 0z" fill="#2b79c6"/><rect x="5" y="13.200" width="6.200" height="2.800" fill="#2b79c6"/><path d="M5.200 4.800 a3 3 0 0 1 1.800 -2.600" stroke="#fff" stroke-width="0.900" fill="none" stroke-linecap="round"/></svg></div><div class="i" style="left:327px;top:12px"><svg width="16" height="16" viewBox="0 0 16 16"><path d="M8.900 1 H1 V15 H15 V8.100" fill="none" stroke="#2b79c6" stroke-width="2"/><path d="M4.200 11.900 L4.500 8.100 L12.600 0 L16 3.400 L7.900 11.500Z" fill="#2b79c6"/><path d="M11.100 1.500 L14.500 4.900" stroke="#fff" stroke-width="0.900"/><path d="M6 9.700 L7.400 8.300" stroke="#fff" stroke-width="1.300" stroke-linecap="round"/></svg></div></div>
<div class="row" style="top:320px"><div class="c " style="left:0px;width:25px"></div><div class="c " style="left:25px;width:36px"></div><div class="c " style="left:61px;width:30px"></div><div class="c " style="left:91px;width:48px"></div><div class="c " style="left:139px;width:40px"></div><div class="c " style="left:179px;width:40px"></div><div class="c " style="left:219px;width:48px"></div><div class="c " style="left:267px;width:48px"></div><div class="c " style="left:315px;width:41px"></div><div class="c t" style="left:356px;width:107px">09</div><div class="c t" style="left:463px;width:91px">111125</div><div class="c t" style="left:554px;width:404px">Ring and Pinion</div><div class="c t" style="left:958px;width:90px">11/21/2016</div><div class="c t" style="left:1048px;width:98px">Robert Smith</div><div class="c t" style="left:1146px;width:141px">PMO</div><div class="i" style="left:7px;top:15px"><span class="radio"></span></div><div class="i" style="left:36.5px;top:12px"><svg width="15" height="15" viewBox="0 0 15 15"><path d="M7.500 0.600 L9.500 5.300 L14.500 5.700 L10.700 9 L11.900 14 L7.500 11.300 L3.100 14 L4.300 9 L0.500 5.700 L5.500 5.300Z" fill="#dadada" stroke="#c6c6c6" stroke-width="0.700"/></svg></div><div class="i" style="left:67px;top:12px"><svg width="16" height="16" viewBox="0 0 16 16"><circle cx="8" cy="8" r="8" fill="#4aa63c"/><path d="M4.900 9.200 L8 6.500 L11.100 9.200" fill="none" stroke="#fff" stroke-width="1.900" stroke-linecap="round" stroke-linejoin="round"/></svg></div><div class="i" style="left:234px;top:12px"><svg width="16" height="16" viewBox="0 0 16 16"><circle cx="8" cy="8" r="8" fill="#2b79c6"/><path d="M6.100 4.300 L11.900 8 L6.100 11.700Z" fill="#fff"/></svg></div><div class="i" style="left:282px;top:12px"><svg width="17" height="16" viewBox="0 0 17 16"><g fill="#1b76c6"><rect x="0" y="1.100" width="13" height="2.800"/><rect x="3.200" y="7.200" width="9.800" height="2.800"/><rect x="3.200" y="13.200" width="13" height="2.800"/></g></svg></div><div class="i" style="left:327px;top:12px"><svg width="16" height="16" viewBox="0 0 16 16"><path d="M8.900 1 H1 V15 H15 V8.100" fill="none" stroke="#2b79c6" stroke-width="2"/><path d="M4.200 11.900 L4.500 8.100 L12.600 0 L16 3.400 L7.900 11.500Z" fill="#2b79c6"/><path d="M11.100 1.500 L14.500 4.900" stroke="#fff" stroke-width="0.900"/><path d="M6 9.700 L7.400 8.300" stroke="#fff" stroke-width="1.300" stroke-linecap="round"/></svg></div></div>
<div class="row alt" style="top:360px"><div class="c " style="left:0px;width:25px"></div><div class="c " style="left:25px;width:36px"></div><div class="c " style="left:61px;width:30px"></div><div class="c " style="left:91px;width:48px"></div><div class="c " style="left:139px;width:40px"></div><div class="c " style="left:179px;width:40px"></div><div class="c " style="left:219px;width:48px"></div><div class="c " style="left:267px;width:48px"></div><div class="c " style="left:315px;width:41px"></div><div class="c t" style="left:356px;width:107px">2.1</div><div class="c t" style="left:463px;width:91px">111124</div><div class="c t" style="left:554px;width:404px">New Gear Box</div><div class="c t" style="left:958px;width:90px">11/21/2016</div><div class="c t" style="left:1048px;width:98px">Tetsuo Kendo</div><div class="c t" style="left:1146px;width:141px">Legal</div><div class="i" style="left:7px;top:15px"><span class="radio"></span></div><div class="i" style="left:36.5px;top:12px"><svg width="15" height="15" viewBox="0 0 15 15"><path d="M7.500 0.600 L9.500 5.300 L14.500 5.700 L10.700 9 L11.900 14 L7.500 11.300 L3.100 14 L4.300 9 L0.500 5.700 L5.500 5.300Z" fill="#dadada" stroke="#c6c6c6" stroke-width="0.700"/></svg></div><div class="i" style="left:67px;top:12px"><svg width="16" height="16" viewBox="0 0 16 16"><circle cx="8" cy="8" r="8" fill="#e8273c"/><path d="M4.900 7.300 L8 10 L11.100 7.300" fill="none" stroke="#fff" stroke-width="1.900" stroke-linecap="round" stroke-linejoin="round"/></svg></div><div class="i" style="left:234px;top:12px"><svg width="16" height="16" viewBox="0 0 16 16"><path d="M1.300 10.500 L5.600 14.300 L15 4.800" fill="none" stroke="#4fa83d" stroke-width="3.400"/><circle cx="4.300" cy="3.400" r="2.900" fill="none" stroke="#4fa83d" stroke-width="1"/><path d="M4.300 1.800 V3.600 H5.600" stroke="#4fa83d" stroke-width="0.900" fill="none"/></svg></div><div class="i" style="left:282px;top:12px"><svg width="16" height="16" viewBox="0 0 16 16"><path d="M8.100 0 a5.100 5.300 0 0 1 3.600 9 c-0.500 0.700 -0.600 1.400 -0.600 2.500 h-6 c0 -1.100 -0.100 -1.800 -0.600 -2.500 A5.100 5.300 0 0 1 8.100 0z" fill="#2b79c6"/><rect x="5" y="13.200" width="6.200" height="2.800" fill="#2b79c6"/><path d="M5.200 4.800 a3 3 0 0 1 1.800 -2.600" stroke="#fff" stroke-width="0.900" fill="none" stroke-linecap="round"/></svg></div><div class="i" style="left:327px;top:12px"><svg width="16" height="16" viewBox="0 0 16 16"><path d="M8.900 1 H1 V15 H15 V8.100" fill="none" stroke="#2b79c6" stroke-width="2"/><path d="M4.200 11.900 L4.500 8.100 L12.600 0 L16 3.400 L7.900 11.500Z" fill="#2b79c6"/><path d="M11.100 1.500 L14.500 4.900" stroke="#fff" stroke-width="0.900"/><path d="M6 9.700 L7.400 8.300" stroke="#fff" stroke-width="1.300" stroke-linecap="round"/></svg></div></div>
<div class="row" style="top:400px"><div class="c " style="left:0px;width:25px"></div><div class="c " style="left:25px;width:36px"></div><div class="c " style="left:61px;width:30px"></div><div class="c " style="left:91px;width:48px"></div><div class="c " style="left:139px;width:40px"></div><div class="c " style="left:179px;width:40px"></div><div class="c " style="left:219px;width:48px"></div><div class="c " style="left:267px;width:48px"></div><div class="c " style="left:315px;width:41px"></div><div class="c t" style="left:356px;width:107px">2.2.1</div><div class="c t" style="left:463px;width:91px">111123</div><div class="c t" style="left:554px;width:404px">Hydro</div><div class="c t" style="left:958px;width:90px">6/02/2016</div><div class="c t" style="left:1048px;width:98px">Michael Miller</div><div class="c t" style="left:1146px;width:141px">Engineering</div><div class="i" style="left:7px;top:15px"><span class="radio"></span></div><div class="i" style="left:36.5px;top:12px"><svg width="15" height="15" viewBox="0 0 15 15"><path d="M7.500 0.600 L9.500 5.300 L14.500 5.700 L10.700 9 L11.900 14 L7.500 11.300 L3.100 14 L4.300 9 L0.500 5.700 L5.500 5.300Z" fill="#dadada" stroke="#c6c6c6" stroke-width="0.700"/></svg></div><div class="i" style="left:67px;top:12px"><svg width="16" height="16" viewBox="0 0 16 16"><circle cx="8" cy="8" r="8" fill="#4aa63c"/><path d="M4.900 9.200 L8 6.500 L11.100 9.200" fill="none" stroke="#fff" stroke-width="1.900" stroke-linecap="round" stroke-linejoin="round"/></svg></div><div class="i" style="left:234px;top:12px"><svg width="16" height="16" viewBox="0 0 16 16"><path d="M4.300 2.500 A6.900 6.900 0 1 0 11.700 2.500" fill="none" stroke="#2b79c6" stroke-width="2.400"/><path d="M8.100 0 V8.600" stroke="#2b79c6" stroke-width="2.100"/></svg></div><div class="i" style="left:282px;top:12px"><svg width="17" height="16" viewBox="0 0 17 16"><g fill="#1b76c6"><rect x="0" y="1.100" width="13" height="2.800"/><rect x="3.200" y="7.200" width="9.800" height="2.800"/><rect x="3.200" y="13.200" width="13" height="2.800"/></g></svg></div><div class="i" style="left:327px;top:12px"><svg width="16" height="16" viewBox="0 0 16 16"><path d="M8.900 1 H1 V15 H15 V8.100" fill="none" stroke="#2b79c6" stroke-width="2"/><path d="M4.200 11.900 L4.500 8.100 L12.600 0 L16 3.400 L7.900 11.500Z" fill="#2b79c6"/><path d="M11.100 1.500 L14.500 4.900" stroke="#fff" stroke-width="0.900"/><path d="M6 9.700 L7.400 8.300" stroke="#fff" stroke-width="1.300" stroke-linecap="round"/></svg></div></div>
<div class="row alt" style="top:440px"><div class="c " style="left:0px;width:25px"></div><div class="c " style="left:25px;width:36px"></div><div class="c " style="left:61px;width:30px"></div><div class="c " style="left:91px;width:48px"></div><div class="c " style="left:139px;width:40px"></div><div class="c " style="left:179px;width:40px"></div><div class="c " style="left:219px;width:48px"></div><div class="c " style="left:267px;width:48px"></div><div class="c " style="left:315px;width:41px"></div><div class="c t" style="left:356px;width:107px">19</div><div class="c t" style="left:463px;width:91px">R01</div><div class="c t" style="left:554px;width:404px">Revision 01</div><div class="c t" style="left:958px;width:90px">1/25/2016</div><div class="c t" style="left:1048px;width:98px">John Smith</div><div class="c t" style="left:1146px;width:141px">Quality Assurance</div><div class="i" style="left:7px;top:15px"><span class="radio"></span></div><div class="i" style="left:36.5px;top:12px"><svg width="15" height="15" viewBox="0 0 15 15"><path d="M7.500 0.600 L9.500 5.300 L14.500 5.700 L10.700 9 L11.900 14 L7.500 11.300 L3.100 14 L4.300 9 L0.500 5.700 L5.500 5.300Z" fill="#dadada" stroke="#c6c6c6" stroke-width="0.700"/></svg></div><div class="i" style="left:67px;top:12px"><svg width="16" height="16" viewBox="0 0 16 16"><circle cx="8" cy="8" r="8" fill="#e8273c"/><path d="M4.900 7.300 L8 10 L11.100 7.300" fill="none" stroke="#fff" stroke-width="1.900" stroke-linecap="round" stroke-linejoin="round"/></svg></div><div class="i" style="left:234px;top:12px"><svg width="16" height="16" viewBox="0 0 16 16"><path d="M1.300 10.500 L5.600 14.300 L15 4.800" fill="none" stroke="#4fa83d" stroke-width="3.400"/><circle cx="4.300" cy="3.400" r="2.900" fill="none" stroke="#4fa83d" stroke-width="1"/><path d="M4.300 1.800 V3.600 H5.600" stroke="#4fa83d" stroke-width="0.900" fill="none"/></svg></div><div class="i" style="left:282px;top:12px"><svg width="16" height="16" viewBox="0 0 16 16"><path d="M2.900 0.900 H10.700 L13.100 3.300 V15.100 H2.900Z" fill="none" stroke="#2b79c6" stroke-width="1.800"/></svg></div><div class="i" style="left:327px;top:12px"><svg width="17" height="16" viewBox="0 0 17 16"><g fill="#2b79c6"><path d="M6.800 0 C2.500 0.500 0 4 0 7.500 C0 10 0.800 12 2.400 13.600 L0.250 14.800 H5.900 V9.100 L4.200 11 C3.400 10 3.100 8.800 3.100 7.500 C3.100 5 4.600 2.800 6.800 2.300Z"/><path d="M6.800 0 C2.500 0.500 0 4 0 7.500 C0 10 0.800 12 2.400 13.600 L0.250 14.800 H5.900 V9.100 L4.200 11 C3.400 10 3.100 8.800 3.100 7.500 C3.100 5 4.600 2.800 6.800 2.300Z" transform="rotate(180 7.950 7.400)"/></g></svg></div></div>
<div class="row" style="top:480px"><div class="c " style="left:0px;width:25px"></div><div class="c " style="left:25px;width:36px"></div><div class="c " style="left:61px;width:30px"></div><div class="c " style="left:91px;width:48px"></div><div class="c " style="left:139px;width:40px"></div><div class="c " style="left:179px;width:40px"></div><div class="c " style="left:219px;width:48px"></div><div class="c " style="left:267px;width:48px"></div><div class="c " style="left:315px;width:41px"></div><div class="c t" style="left:356px;width:107px">BDR</div><div class="c t" style="left:463px;width:91px">111122</div><div class="c t" style="left:554px;width:404px">Test 01</div><div class="c t" style="left:958px;width:90px">1/25/2016</div><div class="c t" style="left:1048px;width:98px">Michael Miller</div><div class="c t" style="left:1146px;width:141px">Quality Assurance</div><div class="i" style="left:7px;top:15px"><span class="radio"></span></div><div class="i" style="left:36.5px;top:12px"><svg width="15" height="15" viewBox="0 0 15 15"><path d="M7.500 0.600 L9.500 5.300 L14.500 5.700 L10.700 9 L11.900 14 L7.500 11.300 L3.100 14 L4.300 9 L0.500 5.700 L5.500 5.300Z" fill="#dadada" stroke="#c6c6c6" stroke-width="0.700"/></svg></div><div class="i" style="left:67px;top:12px"><svg width="16" height="16" viewBox="0 0 16 16"><circle cx="8" cy="8" r="8" fill="#4aa63c"/><path d="M4.900 9.200 L8 6.500 L11.100 9.200" fill="none" stroke="#fff" stroke-width="1.900" stroke-linecap="round" stroke-linejoin="round"/></svg></div><div class="i" style="left:234px;top:12px"><svg width="16" height="16" viewBox="0 0 16 16"><path d="M4.300 2.500 A6.900 6.900 0 1 0 11.700 2.500" fill="none" stroke="#2b79c6" stroke-width="2.400"/><path d="M8.100 0 V8.600" stroke="#2b79c6" stroke-width="2.100"/></svg></div><div class="i" style="left:282px;top:12px"><svg width="16" height="16" viewBox="0 0 16 16"><path d="M2.900 0.900 H10.700 L13.100 3.300 V15.100 H2.900Z" fill="none" stroke="#2b79c6" stroke-width="1.800"/></svg></div><div class="i" style="left:327px;top:12px"><svg width="16" height="16" viewBox="0 0 16 16"><path d="M8.900 1 H1 V15 H15 V8.100" fill="none" stroke="#2b79c6" stroke-width="2"/><path d="M4.200 11.900 L4.500 8.100 L12.600 0 L16 3.400 L7.900 11.500Z" fill="#2b79c6"/><path d="M11.100 1.500 L14.500 4.900" stroke="#fff" stroke-width="0.900"/><path d="M6 9.700 L7.400 8.300" stroke="#fff" stroke-width="1.300" stroke-linecap="round"/></svg></div></div>
    </div>
    <div style="position:absolute;left:1285px;top:50px;width:1px;height:500px;background:#e2e2e2"></div>
    <div id="vsb"></div>
    <div id="hsb"></div>
    <div id="foot">
      <div style="position:absolute;right:164px;top:0;line-height:30px;font-size:12px;color:#777">Total records: 94</div>
      <div class="pg" style="left:1150px;width:45px"><svg width="7" height="9" viewBox="0 0 7 9"><path d="M6.500 0.500 L0.500 4.500 L6.500 8.500Z" fill="#c4c4c4"/></svg></div>
      <div class="pg" style="left:1195px;width:32px;background:#cfcfcf;color:#222;font-weight:bold">1</div>
      <div class="pg" style="left:1227px;width:31px">2</div>
      <div class="pg" style="left:1258px;width:45px"><svg width="7" height="9" viewBox="0 0 7 9"><path d="M0.500 0.500 L6.500 4.500 L0.500 8.500Z" fill="#666"/></svg></div>
    </div>
  </div>
</div>
</div>
</body></html>
